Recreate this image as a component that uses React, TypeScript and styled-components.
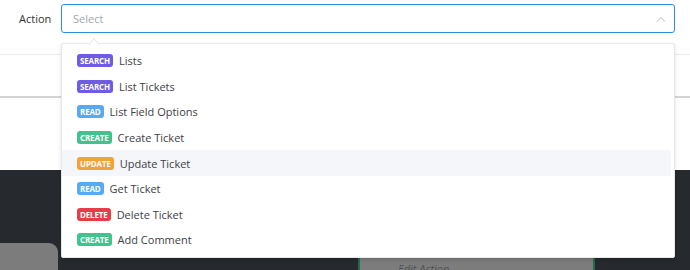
import styled, { createGlobalStyle } from 'styled-components'

const GlobalStyle = createGlobalStyle`
html, body {
  margin: 0;
  padding: 0;
  background: #fff;
  font-family: "Open Sans", "Liberation Sans", sans-serif;
  overflow: hidden;
}
`

type Kind = 'search' | 'read' | 'create' | 'update' | 'delete'

const badgeColors: Record<Kind, string> = {
  search: '#6e5be6',
  read: '#58a9f2',
  create: '#3ec48c',
  update: '#f6a137',
  delete: '#e73c49',
}

const actions: { kind: Kind; label: string; active?: boolean }[] = [
  { kind: 'search', label: 'Lists' },
  { kind: 'search', label: 'List Tickets' },
  { kind: 'read', label: 'List Field Options' },
  { kind: 'create', label: 'Create Ticket' },
  { kind: 'update', label: 'Update Ticket', active: true },
  { kind: 'read', label: 'Get Ticket' },
  { kind: 'delete', label: 'Delete Ticket' },
  { kind: 'create', label: 'Add Comment' },
]

export default function App() {
  return (
    <Page>
      <GlobalStyle />
      <Header>
        <Label>Action</Label>
        <Field>
          <SelectBox>
            <Placeholder>Select</Placeholder>
            <svg width="10" height="6" viewBox="0 0 10 6">
              <path d="M1 5.5 L5 1.5 L9 5.5" fill="none" stroke="#b5b8bd" strokeWidth="1" />
            </svg>
          </SelectBox>
          <Menu>
            <Caret />
            {actions.map(a => (
              <Option key={a.label} active={a.active}>
                <Badge kind={a.kind}>{a.kind}</Badge>
                <OptionLabel>{a.label}</OptionLabel>
              </Option>
            ))}
          </Menu>
        </Field>
      </Header>
      <Tabs />
      <Spacer />
      <Canvas>
        <LeftNode />
        <EditNode>
          <EditText>Edit Action</EditText>
        </EditNode>
      </Canvas>
    </Page>
  )
}

const Page = styled.div`
display: flex;
flex-direction: column;
width: 690px;
height: 270px;
`
const Header = styled.div`
display: flex;
align-items: flex-start;
height: 55px;
padding: 4px 15px 0 19px;
box-sizing: border-box;
border-bottom: 1px solid #ececee;
`
const Label = styled.div`
width: 42px;
line-height: 29px;
font-size: 11px;
color: #333;
`
const Field = styled.div`
position: relative;
flex: 1;
`
const SelectBox = styled.div`
display: flex;
align-items: center;
justify-content: space-between;
height: 29px;
box-sizing: border-box;
padding: 0 8px 0 11px;
border: 1px solid #2a8fdc;
border-radius: 3px;
`
const Placeholder = styled.span`
font-size: 11px;
color: #a4a7ab;
`
const Menu = styled.div`
position: absolute;
z-index: 5;
top: 39px;
left: 0;
right: 0;
padding: 4px 3px 4px 0;
background: #fff;
border: 1px solid #e7e8eb;
border-radius: 2px;
box-shadow: 0 2px 4px rgba(0, 0, 0, 0.12);
`
const Caret = styled.div`
position: absolute;
top: -4px;
left: 28px;
width: 7px;
height: 7px;
background: #fff;
border-left: 1px solid #e7e8eb;
border-top: 1px solid #e7e8eb;
transform: rotate(45deg);
`
const Option = styled.div<{ active?: boolean }>`
display: flex;
align-items: center;
gap: 6px;
height: 25.6px;
padding-left: 15px;
background: ${({ active }) => (active ? '#f4f6f9' : 'transparent')};
`
const Badge = styled.span<{ kind: Kind }>`
display: inline-flex;
align-items: center;
height: 13px;
padding: 0 3px;
border-radius: 3px;
background: ${({ kind }) => badgeColors[kind]};
color: #fff;
font-size: 8px;
font-weight: 700;
letter-spacing: -0.15px;
text-transform: uppercase;
`
const OptionLabel = styled.span`
font-size: 11px;
color: #3d4146;
`
const Tabs = styled.div`
height: 41px;
border-bottom: 2px solid #d2d3d5;
`
const Spacer = styled.div`
height: 72px;
`
const Canvas = styled.div`
position: relative;
flex: 1;
background: #26292d;
overflow: hidden;
`
const LeftNode = styled.div`
position: absolute;
left: 0;
top: 73px;
width: 58px;
height: 60px;
background: #7c7c7c;
border-radius: 0 9px 0 0;
`
const EditNode = styled.div`
position: absolute;
left: 358px;
top: 87px;
width: 233px;
height: 40px;
background: #7c7c7c;
border-left: 2px solid #1f6e4b;
border-right: 2px solid #1f6e4b;
`
const EditText = styled.div`
padding: 4px 0 0 38px;
font-size: 11px;
font-style: italic;
color: #505254;
`
